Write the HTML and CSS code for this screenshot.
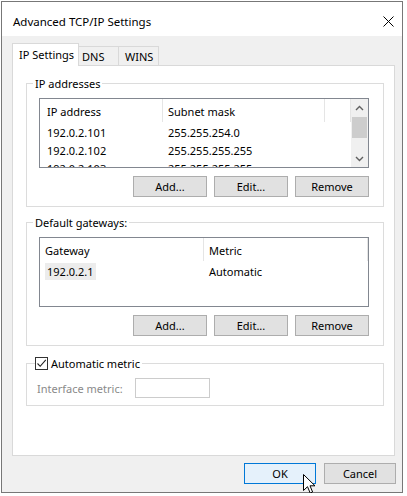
FILE: index.html
```html
<!DOCTYPE html>
<html lang="en">
  <head>
    <meta charset="UTF-8" />
    <title>Advanced TCP/IP Settings</title>
    <link rel="stylesheet" href="styles.css">
  </head>
  <body>
    <div class="window">
      <div class="titlebar">
        <span class="title">Advanced TCP/IP Settings</span>
        <svg class="close" width="11" height="11" viewBox="0 0 11 11">
          <path d="M0.5 0.5 L10.5 10.5 M10.5 0.5 L0.5 10.5" stroke="#000" stroke-width="1" fill="none" />
        </svg>
      </div>

      <div class="client">
        <div class="tabs">
          <div class="tab active">IP Settings</div>
          <div class="tab tab-dns">DNS</div>
          <div class="tab tab-wins">WINS</div>
        </div>

        <div class="panel">
          <!-- IP addresses -->
          <fieldset class="group">
            <legend>IP addresses</legend>
            <div class="listview">
              <div class="lv-body">
                <div class="lv-row lv-header">
                  <div class="cell ip-col">IP address</div>
                  <div class="cell mask-col">Subnet mask</div>
                  <div class="cell fill-col"></div>
                </div>
                <div class="lv-row">
                  <div class="cell ip-col">192.0.2.101</div>
                  <div class="cell mask-col">255.255.254.0</div>
                </div>
                <div class="lv-row">
                  <div class="cell ip-col">192.0.2.102</div>
                  <div class="cell mask-col">255.255.255.255</div>
                </div>
                <div class="lv-row">
                  <div class="cell ip-col">192.0.2.103</div>
                  <div class="cell mask-col">255.255.255.255</div>
                </div>
              </div>
              <div class="scrollbar">
                <div class="sb-arrow">
                  <svg width="9" height="6" viewBox="0 0 9 6"><path d="M1 5 L4.5 1.5 L8 5" stroke="#606060" stroke-width="1.4" fill="none" /></svg>
                </div>
                <div class="sb-thumb"></div>
                <div class="sb-track"></div>
                <div class="sb-arrow">
                  <svg width="9" height="6" viewBox="0 0 9 6"><path d="M1 1 L4.5 4.5 L8 1" stroke="#606060" stroke-width="1.4" fill="none" /></svg>
                </div>
              </div>
            </div>
            <div class="buttons">
              <button class="btn">Add...</button>
              <button class="btn">Edit...</button>
              <button class="btn">Remove</button>
            </div>
          </fieldset>

          <!-- Default gateways -->
          <fieldset class="group">
            <legend>Default gateways:</legend>
            <div class="listview">
              <div class="lv-body">
                <div class="lv-row lv-header">
                  <div class="cell gw-col">Gateway</div>
                  <div class="cell metric-col">Metric</div>
                </div>
                <div class="lv-row">
                  <div class="cell gw-col"><span class="selected">192.0.2.1</span></div>
                  <div class="cell metric-col">Automatic</div>
                </div>
              </div>
            </div>
            <div class="buttons">
              <button class="btn">Add...</button>
              <button class="btn">Edit...</button>
              <button class="btn">Remove</button>
            </div>
          </fieldset>

          <!-- Metric -->
          <fieldset class="group metric-group">
            <legend>
              <span class="checkbox">
                <svg width="11" height="11" viewBox="0 0 11 11"><path d="M1.5 5.5 L4.2 8.3 L9.8 1.8" stroke="#222" stroke-width="1.1" fill="none" /></svg>
              </span>
              Automatic metric
            </legend>
            <div class="metric-row">
              <span class="disabled-label">Interface metric:</span>
              <span class="textbox"></span>
            </div>
          </fieldset>
        </div>

        <div class="dialog-buttons">
          <button class="btn btn-default">OK</button>
          <button class="btn">Cancel</button>
        </div>
      </div>

      <svg class="cursor" width="13" height="20" viewBox="0 0 13 20">
        <path d="M0.5 0.5 L0.5 16.5 L4.5 12.7 L7.2 19 L9.6 18 L7 11.8 L12 11.8 Z" fill="#fff" stroke="#000" stroke-width="1" stroke-linejoin="miter" />
      </svg>
    </div>
  </body>
</html>
```

FILE: styles.css
```css
:root {
  --face: #f0f0f0;
  --tab-border: #d9d9d9;
  --group-border: #dcdcdc;
  --list-border: #828790;
  --btn-face: #e1e1e1;
  --btn-border: #adadad;
  --accent: #0078d7;
}

* {
  box-sizing: border-box;
}

body {
  margin: 0;
  padding: 1px 0 0 1px;
  background: #fff;
  font-family: 'Noto Sans', 'Open Sans', sans-serif;
  font-size: 11px;
  line-height: 15px;
  color: #000;
}

.window {
  position: relative;
  width: 402px;
  height: 492px;
  border: 1px solid #777;
  display: flex;
  flex-direction: column;
}

.titlebar {
  height: 34px;
  background: #fff;
  display: flex;
  align-items: center;
  justify-content: space-between;
  padding: 5px 8px 0 11px;
  font-size: 11.5px;
}

.client {
  flex: 1;
  background: var(--face);
  padding: 7px 7px 0 10px;
  display: flex;
  flex-direction: column;
}

/* tab strip */
.tabs {
  display: flex;
  align-items: flex-end;
  height: 22px;
}

.tab {
  height: 19px;
  border: 1px solid var(--tab-border);
  border-bottom: none;
  background: var(--face);
  padding: 2px 0 0 4px;
  margin-left: -1px;
  white-space: nowrap;
}

.tab.active {
  position: relative;
  z-index: 1;
  height: 23px;
  margin: 0 0 -1px 0;
  width: 67px;
  background: #fff;
  padding: 3px 0 0 6px;
}

.tab-dns {
  width: 41px;
  padding-left: 3px;
}

.tab-wins {
  width: 41px;
  padding-left: 6px;
}

.panel {
  height: 391px;
  background: #fff;
  border: 1px solid var(--tab-border);
  padding: 10px 10px 0 13px;
}

/* group boxes */
.group {
  margin: 0 0 8px 0;
  padding: 7px 14px 9px 12px;
  border: 1px solid var(--group-border);
  min-width: 0;
}

.group legend {
  padding: 0 2px;
  margin-left: -6px;
  line-height: 15px;
}

/* list views */
.listview {
  height: 70px;
  border: 1px solid var(--list-border);
  display: flex;
  overflow: hidden;
}

.lv-body {
  flex: 1;
  overflow: hidden;
}

.lv-row {
  display: flex;
  height: 18px;
  align-items: center;
}

.lv-header {
  height: 24px;
  padding-top: 2px;
}

.cell {
  padding: 0 5px;
  white-space: nowrap;
  height: 100%;
  display: flex;
  align-items: center;
}

.ip-col {
  width: 123px;
  padding-left: 7px;
}

.mask-col {
  width: 162px;
}

.fill-col {
  flex: 1;
}

.gw-col {
  width: 164px;
  padding-left: 5px;
}

.metric-col {
  flex: 1;
}

.lv-header .cell {
  border-right: 1px solid #e5e5e5;
  height: 23px;
  align-self: flex-start;
  margin-top: -2px;
  padding-top: 2px;
}

.selected {
  background: #ececec;
  padding: 1px 2px;
}

.scrollbar {
  width: 17px;
  background: var(--face);
  display: flex;
  flex-direction: column;
}

.sb-arrow {
  height: 17px;
  display: flex;
  align-items: center;
  justify-content: center;
}

.sb-thumb {
  height: 21px;
  margin: 1px 1px 0;
  background: #cdcdcd;
}

.sb-track {
  flex: 1;
}

/* push buttons */
.buttons {
  display: flex;
  justify-content: flex-end;
  gap: 7px;
  margin-top: 8px;
}

.btn {
  width: 74px;
  height: 21px;
  padding: 0;
  background: var(--btn-face);
  border: 1px solid var(--btn-border);
  font: inherit;
  color: #000;
}

.btn-default {
  background: #e5f1fb;
  border-color: var(--accent);
}

/* automatic metric */
.metric-group {
  margin-top: 10px;
  padding: 7px 10px 7px 10px;
}

.metric-group legend {
  display: flex;
  align-items: center;
  gap: 3px;
  margin-left: -2px;
  padding: 0 2px 0 0;
}

.checkbox {
  width: 13px;
  height: 13px;
  border: 1px solid #333;
  background: #fff;
  display: flex;
  align-items: center;
  justify-content: center;
}

.metric-row {
  display: flex;
  align-items: center;
}

.disabled-label {
  width: 98px;
  color: #8a8a8a;
}

.textbox {
  width: 75px;
  height: 20px;
  border: 1px solid #cccccc;
  background: #fff;
}

.dialog-buttons {
  display: flex;
  justify-content: flex-end;
  gap: 8px;
  margin-top: 7px;
  margin-right: -1px;
}

.dialog-buttons .btn {
  width: 72px;
}

.cursor {
  position: absolute;
  left: 301px;
  top: 472px;
}
```
